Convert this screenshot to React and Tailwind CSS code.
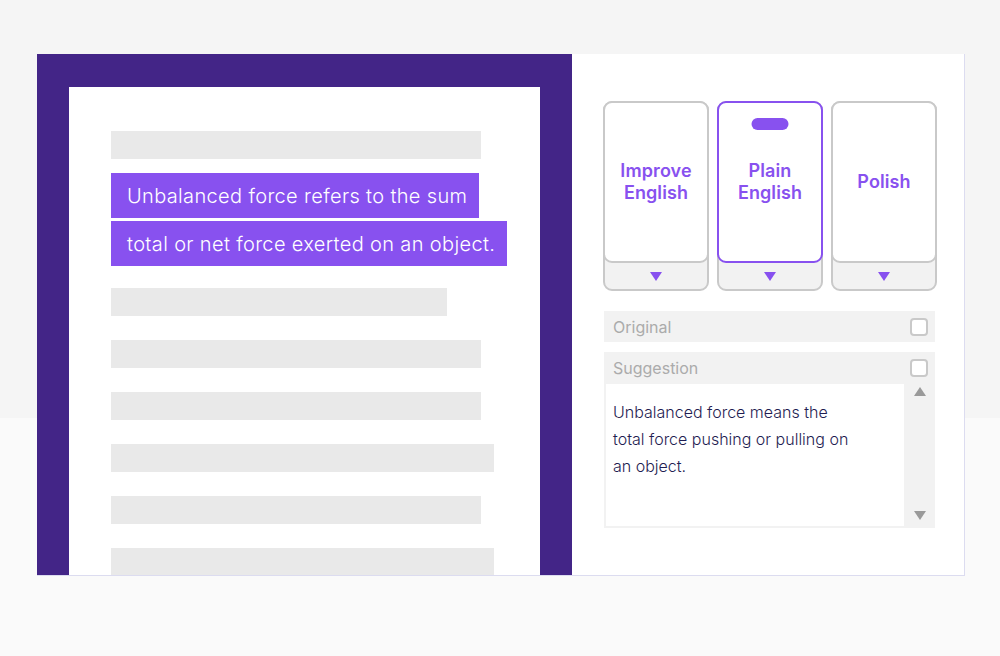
import React from "react";

const font = "font-['Inter','Liberation_Sans',sans-serif]";

function Tri({ up, className }) {
  return (
    <svg viewBox="0 0 12 9" className={className}>
      <path d={up ? "M6 0 L12 9 L0 9 Z" : "M0 0 L12 0 L6 9 Z"} fill="currentColor" />
    </svg>
  );
}

function Mode({ lines, active, widthClass }) {
  return (
    <div className={`${widthClass} h-[190px] rounded-[9px] border-2 border-[#c9c9c9] bg-[#f2f2f2] flex flex-col`}>
      <div
        className={`relative h-[162px] -mx-[2px] -mt-[2px] rounded-[9px] border-2 bg-white flex flex-col items-center justify-center ${
          active ? "border-[#8851ef]" : "border-[#c9c9c9]"
        }`}
      >
        {active && <div className="absolute top-[15px] left-1/2 -translate-x-1/2 w-[37px] h-[12px] rounded-full bg-[#8851ef]" />}
        {lines.map((l) => (
          <div key={l} className="text-[18px] leading-[22px] font-semibold text-[#8851ef] tracking-[0.1px]">
            {l}
          </div>
        ))}
      </div>
      <div className="flex-1 flex items-center justify-center text-[#8851ef]">
        <Tri className="w-[12px] h-[9px]" />
      </div>
    </div>
  );
}

function Check() {
  return <div className="w-[18px] h-[18px] rounded-[4px] border-2 border-[#c9c9c9] bg-white" />;
}

export default function App() {
  return (
    <div className={`${font} w-[1000px] h-[656px] overflow-hidden pt-[54px] pl-[37px] bg-[linear-gradient(#f5f5f5_418px,#fafafa_418px)]`}>
      <div className="w-[928px] h-[522px] flex bg-white border-r border-b border-[#dcdcf0]">
        {/* left */}
        <div className="w-[535px] h-full bg-[#432587] pt-[33px] pl-[32px] overflow-hidden">
          <div className="w-[471px] h-[500px] bg-white pt-[44px] pl-[42px] flex flex-col items-start">
            <div className="w-[370px] h-[28px] shrink-0 bg-[#e9e9e9]" />
            <div className="mt-[14px] w-[368px] h-[45px] shrink-0 bg-[#8851ef] text-white font-light text-[20px] pl-[16px] flex items-center whitespace-nowrap tracking-[0.35px]">
              Unbalanced force refers to the sum
            </div>
            <div className="mt-[3px] w-[396px] h-[45px] shrink-0 bg-[#8851ef] text-white font-light text-[20px] pl-[16px] flex items-center whitespace-nowrap tracking-[0.35px]">
              total or net force exerted on an object.
            </div>
            <div className="mt-[22px] w-[336px] h-[28px] shrink-0 bg-[#e9e9e9]" />
            <div className="mt-[24px] w-[370px] h-[28px] shrink-0 bg-[#e9e9e9]" />
            <div className="mt-[24px] w-[370px] h-[28px] shrink-0 bg-[#e9e9e9]" />
            <div className="mt-[24px] w-[383px] h-[28px] shrink-0 bg-[#e9e9e9]" />
            <div className="mt-[24px] w-[370px] h-[28px] shrink-0 bg-[#e9e9e9]" />
            <div className="mt-[24px] w-[383px] h-[28px] shrink-0 bg-[#e9e9e9]" />
          </div>
        </div>
        {/* right */}
        <div className="flex-1 pt-[47px] pl-[31px]">
          <div className="flex gap-[8px]">
            <Mode lines={["Improve", "English"]} widthClass="w-[106px]" />
            <Mode lines={["Plain", "English"]} active widthClass="w-[106px]" />
            <Mode lines={["Polish"]} widthClass="w-[106px]" />
          </div>
          <div className="mt-[20px] ml-[1px] w-[331px] h-[31px] bg-[#f2f2f2] flex items-center justify-between pl-[9px] pr-[7px] text-[16px] text-[#ababab]">
            <span>Original</span>
            <Check />
          </div>
          <div className="mt-[10px] ml-[1px] w-[331px] h-[176px] bg-[#f2f2f2] flex flex-col">
            <div className="h-[32px] shrink-0 flex items-center justify-between pl-[9px] pr-[7px] text-[16px] text-[#ababab]">
              <span>Suggestion</span>
              <Check />
            </div>
            <div className="flex flex-1 pb-[2px] pl-[2px]">
              <div className="w-[298px] h-[142px] bg-white pl-[7px] pt-[15px] text-[16px] leading-[27px] text-[#1f1d52] font-light">
                Unbalanced force means the
                <br />
                total force pushing or pulling on
                <br />
                an object.
              </div>
              <div className="flex-1 flex flex-col items-center justify-between pt-[3px] pb-[6px] text-[#9a9a9a]">
                <Tri up className="w-[12px] h-[9px]" />
                <Tri className="w-[12px] h-[9px]" />
              </div>
            </div>
          </div>
        </div>
      </div>
    </div>
  );
}
